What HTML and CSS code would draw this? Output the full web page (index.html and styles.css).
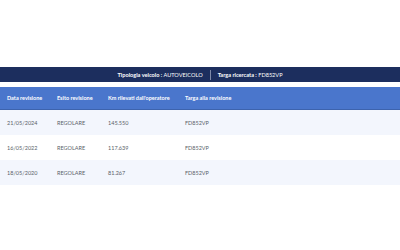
FILE: index.html
```html
<!DOCTYPE html>
<html lang="it">
<head>
<meta charset="utf-8">
<link rel="stylesheet" href="styles.css">
</head>
<body>
<div class="page">
  <div class="info-bar">
    <span class="info"><b>Tipologia veicolo :</b> AUTOVEICOLO</span>
    <span class="sep"></span>
    <span class="info"><b>Targa ricercata :</b> FD852VP</span>
  </div>
  <div class="table">
    <div class="row head">
      <span>Data revisione</span>
      <span>Esito revisione</span>
      <span>Km rilevati dall'operatore</span>
      <span>Targa alla revisione</span>
    </div>
    <div class="row alt">
      <span>21/05/2024</span>
      <span>REGOLARE</span>
      <span>145.550</span>
      <span>FD852VP</span>
    </div>
    <div class="row">
      <span>16/05/2022</span>
      <span>REGOLARE</span>
      <span>117.639</span>
      <span>FD852VP</span>
    </div>
    <div class="row alt">
      <span>18/05/2020</span>
      <span>REGOLARE</span>
      <span>81.267</span>
      <span>FD852VP</span>
    </div>
  </div>
</div>
</body>
</html>
```

FILE: styles.css
```css
html, body {
  margin: 0;
  padding: 0;
  background: #ffffff;
}
body {
  font-family: Lato, "Noto Sans", sans-serif;
  width: 400px;
  height: 250px;
  overflow: hidden;
}
.page {
  padding-top: 67px;
}
.info-bar {
  background: #1c2e5e;
  height: 15px;
  display: flex;
  align-items: center;
  justify-content: center;
  gap: 7px;
  color: #ffffff;
  font-size: 5.6px;
}
.info b {
  font-weight: 700;
}
.sep {
  width: 1px;
  height: 10px;
  background: #7f8aa8;
}
.table {
  margin-top: 5px;
}
.row {
  display: grid;
  grid-template-columns: 50px 51px 77px 1fr;
  align-items: center;
  height: 25px;
  padding-left: 7px;
  font-size: 5.5px;
  color: #5a5f69;
}
.row.head {
  background: #4a76cc;
  color: #ffffff;
  font-weight: 700;
  height: 22px;
  border-bottom: 1px solid #3d63ad;
}
.row.alt {
  background: #f3f6fd;
}
```
